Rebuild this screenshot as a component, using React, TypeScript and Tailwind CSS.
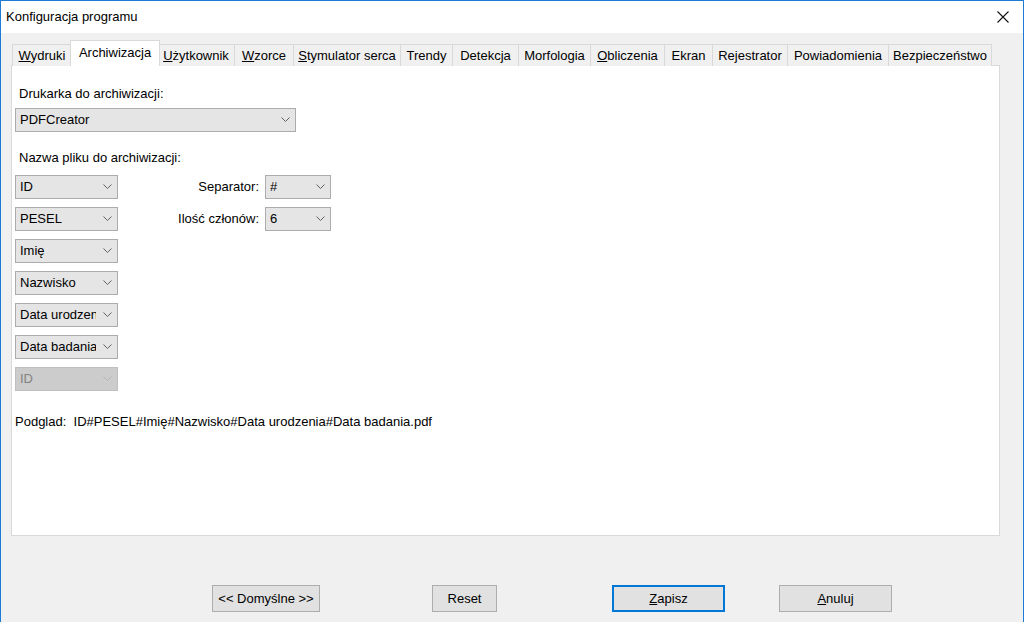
import { ReactNode } from "react";

type Tab = { label: ReactNode; w: number };

const tabs: Tab[] = [
  { label: <><u>W</u>ydruki</>, w: 60 },
  { label: "Archiwizacja", w: 90 },
  { label: <><u>U</u>żytkownik</>, w: 77 },
  { label: <><u>W</u>zorce</>, w: 59 },
  { label: <><u>S</u>tymulator serca</>, w: 107 },
  { label: "Trendy", w: 52 },
  { label: "Detekcja", w: 66 },
  { label: "Morfologia", w: 72 },
  { label: <><u>O</u>bliczenia</>, w: 74 },
  { label: "Ekran", w: 48 },
  { label: "Rejestrator", w: 75 },
  { label: "Powiadomienia", w: 101 },
  { label: "Bezpieczeństwo", w: 103 },
];

function Chevron({ disabled }: { disabled?: boolean }) {
  return (
    <svg width="9" height="6" viewBox="0 0 9 6" className="shrink-0 ml-[7px]">
      <polyline
        points="0.5,0.5 4.5,4.5 8.5,0.5"
        fill="none"
        stroke={disabled ? "#b5b5b5" : "#606060"}
        strokeWidth="1"
      />
    </svg>
  );
}

function Combo({ value, w, disabled }: { value: string; w: number; disabled?: boolean }) {
  return (
    <div
      style={{ width: w }}
      className={`h-[24px] flex items-center pl-[4px] pr-[5px] border ${
        disabled
          ? "bg-[#cccccc] border-[#bfbfbf] text-[#838383]"
          : "bg-[#e5e5e5] border-[#acacac] text-black"
      }`}
    >
      <span className="flex-1 min-w-0 overflow-hidden whitespace-nowrap">{value}</span>
      <Chevron disabled={disabled} />
    </div>
  );
}

function Button({ children, w, primary }: { children: ReactNode; w: number; primary?: boolean }) {
  return (
    <button
      style={{ width: w }}
      className={`h-[27px] bg-[#e1e1e1] flex items-center justify-center ${
        primary ? "border-2 border-[#0078d7]" : "border border-[#adadad]"
      }`}
    >
      {children}
    </button>
  );
}

export default function App() {
  const fields = ["ID", "PESEL", "Imię", "Nazwisko", "Data urodzenia", "Data badania"];

  return (
    <div className="w-[1024px] h-[622px] overflow-hidden bg-[#f0f0f0] border-x border-t border-[#1b7cd6] flex flex-col text-[13px] leading-[16px] text-black font-['Liberation_Sans','Noto_Sans',sans-serif]">
      {/* title bar */}
      <div className="h-[32px] shrink-0 bg-white flex items-center justify-between pl-[5px] pr-[14px]">
        <span className="text-[13px]">Konfiguracja programu</span>
        <svg width="12" height="12" viewBox="0 0 12 12">
          <path d="M0.5 0.5 L11.5 11.5 M11.5 0.5 L0.5 11.5" stroke="#111" strokeWidth="1.1" />
        </svg>
      </div>

      {/* tabs + panel */}
      <div className="pl-[10px] pr-[23px] pt-[7px]">
        <div className="flex items-end h-[26px] -mb-[1px] pl-[1px]">
          {tabs.map((t, i) =>
            i === 1 ? (
              <div
                key={i}
                style={{ width: t.w }}
                className="relative z-10 -mx-[2px] h-[26px] bg-white border-x border-t border-[#d9d9d9] flex items-center justify-center pb-[2px] whitespace-nowrap"
              >
                {t.label}
              </div>
            ) : (
              <div
                key={i}
                style={{ width: t.w }}
                className={`h-[22px] bg-[#f0f0f0] border-t border-r border-[#d9d9d9] flex items-center justify-center whitespace-nowrap ${
                  i === 0 ? "border-l" : ""
                }`}
              >
                {t.label}
              </div>
            )
          )}
        </div>

        <div className="h-[471px] bg-white border border-[#d9d9d9] pl-[3px] pt-[20px]">
          <div className="pl-[4px]">Drukarka do archiwizacji:</div>
          <div className="mt-[6px]">
            <Combo value="PDFCreator" w={281} />
          </div>

          <div className="pl-[4px] mt-[18px]">Nazwa pliku do archiwizacji:</div>

          <div className="mt-[9px] flex">
            <div className="flex flex-col gap-[8px]">
              {fields.map((f) => (
                <Combo key={f} value={f} w={103} />
              ))}
              <Combo value="ID" w={103} disabled />
            </div>
            <div className="ml-[6px] flex flex-col gap-[8px]">
              <div className="flex items-center">
                <span className="w-[141px] text-right pr-[6px]">Separator:</span>
                <Combo value="#" w={66} />
              </div>
              <div className="flex items-center">
                <span className="w-[141px] text-right pr-[6px]">Ilość członów:</span>
                <Combo value="6" w={66} />
              </div>
            </div>
          </div>

          <div className="mt-[23px] whitespace-pre">
            Podglad:  ID#PESEL#Imię#Nazwisko#Data urodzenia#Data badania.pdf
          </div>
        </div>
      </div>

      {/* buttons */}
      <div className="mt-[49px] flex pl-[211px]">
        <Button w={108}>&lt;&lt; Domyślne &gt;&gt;</Button>
        <div className="ml-[112px]">
          <Button w={65}>Reset</Button>
        </div>
        <div className="ml-[115px]">
          <Button w={113} primary>
            <span><u>Z</u>apisz</span>
          </Button>
        </div>
        <div className="ml-[54px]">
          <Button w={113}>
            <span><u>A</u>nuluj</span>
          </Button>
        </div>
      </div>
    </div>
  );
}
